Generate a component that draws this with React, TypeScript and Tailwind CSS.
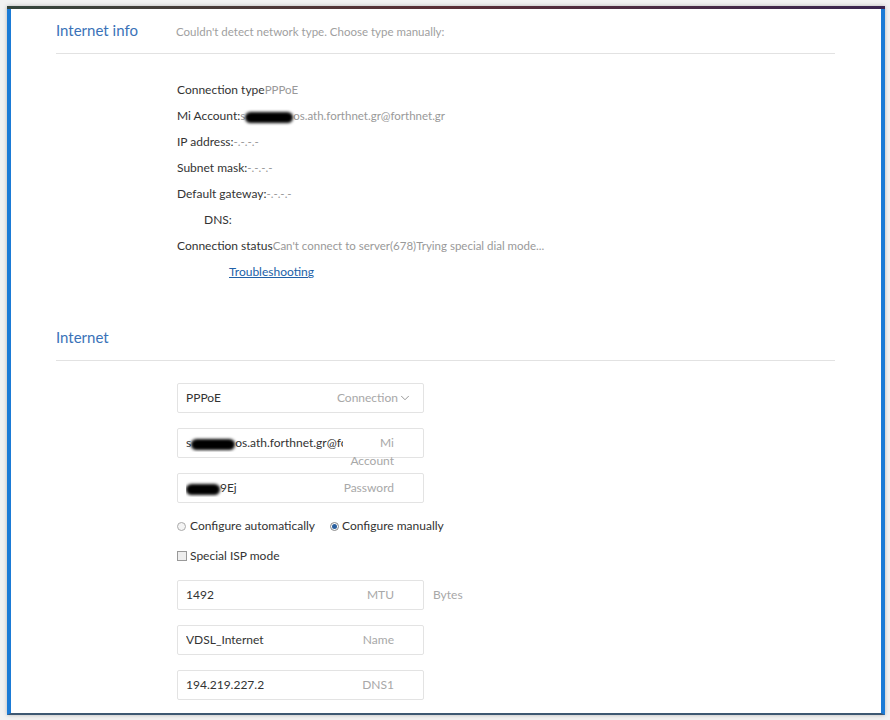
import { ChevronDown } from 'lucide-react'

const font = { fontFamily: 'Lato, "Noto Sans", sans-serif' }

function Blob({ w }: { w: number }) {
  // redacted area in the screenshot
  return (
    <span
      className="inline-block h-[11px] rounded-full bg-black align-middle blur-[1.5px]"
      style={{ width: w }}
    />
  )
}

function InfoRow({ label, value, indent }: { label: string; value?: React.ReactNode; indent?: boolean }) {
  return (
    <div className={`h-[26px] leading-[26px] text-[12px] text-[#333] ${indent ? 'pl-[27px]' : ''}`}>
      {label}
      {value && <span className="text-[11.5px] text-[#999]">{value}</span>}
    </div>
  )
}

function Field({
  value,
  label,
  children,
  clip,
}: {
  value: React.ReactNode
  label?: React.ReactNode
  children?: React.ReactNode
  clip?: boolean
}) {
  return (
    <div className="relative flex h-[30px] w-[247px] items-center rounded-[2px] border border-[#e3e3e3] bg-white pl-2 pr-[29px] text-[12px] text-[#333]">
      <div className={`min-w-0 overflow-hidden whitespace-nowrap ${clip ? 'w-[157px]' : 'flex-1'}`}>{value}</div>
      {label}
      {children}
    </div>
  )
}

export default function App() {
  return (
    <div className="h-[720px] w-[890px] overflow-hidden bg-[#f2f2f2] pt-[6px] pl-[7px]" style={font}>
      <div className="flex h-[709px] w-[878px] flex-col overflow-hidden bg-white shadow-[0_0_4px_rgba(0,0,0,0.25)]">
        <div className="h-[3px] bg-gradient-to-r from-[#34453c] via-[#5a2e36] to-[#3a2550]" />
        <div className="flex min-h-0 flex-1 border-x-4 border-b-2 border-x-[#1b7bd6] border-b-[#3e5872]">
          <div className="flex-1 overflow-hidden pl-[45px] pr-[46px]">
            {/* Internet info */}
            <div className="flex items-baseline border-b border-[#e2e2e2] pt-[11px] pb-[13px]">
              <div className="w-[120px] text-[15px] leading-[20px] text-[#3a72b8]">Internet info</div>
              <div className="text-[11.5px] text-[#a0a0a0]">Couldn't detect network type. Choose type manually:</div>
            </div>

            <div className="mt-[23px] pl-[121px]">
              <InfoRow label="Connection type" value="PPPoE" />
              <InfoRow
                label="Mi Account:"
                value={
                  <>
                    s<Blob w={48} />
                    os.ath.forthnet.gr@forthnet.gr
                  </>
                }
              />
              <InfoRow label="IP address:" value="-.-.-.-" />
              <InfoRow label="Subnet mask:" value="-.-.-.-" />
              <InfoRow label="Default gateway:" value="-.-.-.-" />
              <InfoRow label="DNS:" indent />
              <InfoRow label="Connection status" value="Can't connect to server(678)Trying special dial mode..." />
              <div className="h-[26px] pl-[52px] text-[12px] leading-[26px]">
                <a href="#" className="text-[#2161a8] underline">
                  Troubleshooting
                </a>
              </div>
            </div>

            {/* Internet */}
            <div className="mt-[42px] border-b border-[#e2e2e2] pb-[13px]">
              <div className="text-[15px] leading-[20px] text-[#3a72b8]">Internet</div>
            </div>

            <div className="mt-[22px] flex flex-col pl-[121px]">
              <Field
                value="PPPoE"
                label={
                  <span className="-mr-[18px] flex items-center text-[#a8a8a8]">
                    Connection
                    <ChevronDown className="size-[14px] text-[#777]" strokeWidth={1.3} />
                  </span>
                }
              />
              <div className="mt-[15px]">
                <Field
                  clip
                  value={
                    <>
                      s<Blob w={44} />
                      os.ath.forthnet.gr@forthnet.gr
                    </>
                  }
                >
                  <span className="absolute top-[5px] right-[29px] text-right text-[12px] leading-[18px] text-[#a8a8a8]">
                    Mi
                    <br />
                    Account
                  </span>
                </Field>
              </div>
              <div className="mt-[15px]">
                <Field
                  value={
                    <>
                      <Blob w={34} />
                      9Ej
                    </>
                  }
                  label={<span className="text-[#a8a8a8]">Password</span>}
                />
              </div>

              <div className="mt-[8px] flex h-[30px] items-center text-[12px] text-[#333]">
                <span className="mr-[4px] inline-block size-[9px] rounded-full border border-[#aaa] bg-[#f4f4f4]" />
                Configure automatically
                <span className="mr-[3px] ml-[15px] flex size-[9px] items-center justify-center rounded-full border border-[#888] bg-white">
                  <span className="size-[5px] rounded-full bg-[#2a5f9e]" />
                </span>
                Configure manually
              </div>
              <div className="flex h-[30px] items-center text-[12px] text-[#333]">
                <span className="mr-[3px] inline-block size-[10px] border border-[#999] bg-[#eee]" />
                Special ISP mode
              </div>

              <div className="mt-[9px] flex items-center">
                <Field value="1492" label={<span className="text-[#a8a8a8]">MTU</span>} />
                <span className="ml-[9px] text-[12px] text-[#a8a8a8]">Bytes</span>
              </div>
              <div className="mt-[15px]">
                <Field value="VDSL_Internet" label={<span className="text-[#a8a8a8]">Name</span>} />
              </div>
              <div className="mt-[15px]">
                <Field value="194.219.227.2" label={<span className="text-[#a8a8a8]">DNS1</span>} />
              </div>
            </div>
          </div>
        </div>
      </div>
    </div>
  )
}
